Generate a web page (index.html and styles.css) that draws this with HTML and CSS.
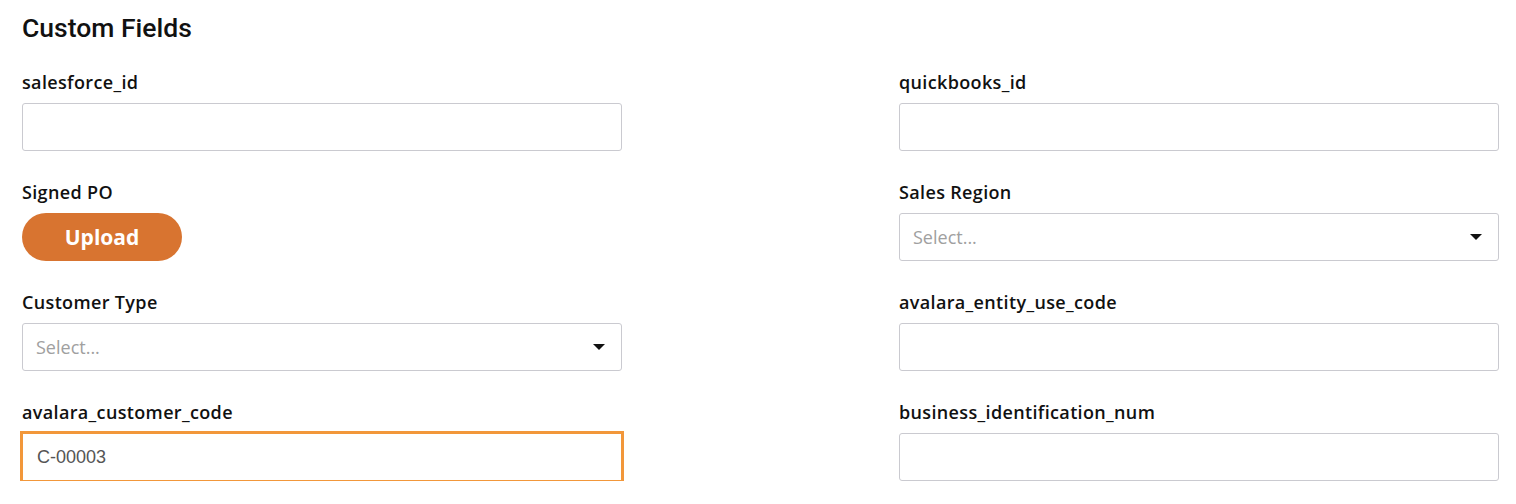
FILE: index.html
```html
<!DOCTYPE html>
<html>
<head>
    <title>Custom Fields</title>
    <link rel="stylesheet" href="styles.css">
</head>
<body>
<div class="custom-fields">
    <h2 class="section-title">Custom Fields</h2>
    <div class="field-grid">
        <div class="field">
            <label for="salesforce_id">salesforce_id</label>
            <input type="text" id="salesforce_id" class="text-input">
        </div>
        <div class="field">
            <label for="quickbooks_id">quickbooks_id</label>
            <input type="text" id="quickbooks_id" class="text-input">
        </div>
        <div class="field">
            <label>Signed PO</label>
            <button class="upload-btn">Upload</button>
        </div>
        <div class="field">
            <label>Sales Region</label>
            <div class="select-box">
                <span class="placeholder">Select...</span>
                <span class="caret"></span>
            </div>
        </div>
        <div class="field">
            <label>Customer Type</label>
            <div class="select-box">
                <span class="placeholder">Select...</span>
                <span class="caret"></span>
            </div>
        </div>
        <div class="field">
            <label for="avalara_entity_use_code">avalara_entity_use_code</label>
            <input type="text" id="avalara_entity_use_code" class="text-input">
        </div>
        <div class="field">
            <label for="avalara_customer_code">avalara_customer_code</label>
            <div class="text-input focused">
                <span class="input-value">C-00003</span>
            </div>
        </div>
        <div class="field">
            <label for="business_identification_num">business_identification_num</label>
            <input type="text" id="business_identification_num" class="text-input">
        </div>
    </div>
</div>
</body>
</html>
```

FILE: styles.css
```css
body {
    margin: 0;
    background: #fff;
    font-family: "Open Sans", sans-serif;
    color: #111;
}

.custom-fields {
    padding: 12px 17px 0 22px;
}

.section-title {
    margin: 0 0 26px;
    font-family: Roboto, sans-serif;
    font-weight: 500;
    font-size: 26.5px;
    line-height: 32px;
    color: #111;
}

.field-grid {
    display: grid;
    grid-template-columns: 600px 600px;
    column-gap: 277px;
    row-gap: 29px;
}

.field label {
    display: block;
    font-size: 18px;
    font-weight: 600;
    letter-spacing: 0.35px;
    line-height: 24px;
    margin-bottom: 9px;
    color: #111;
}

.text-input,
.select-box {
    display: block;
    box-sizing: border-box;
    width: 100%;
    height: 48px;
    border: 1px solid #cacad0;
    border-radius: 3px;
    background: #fff;
}

.text-input {
    padding-left: 14px;
    font-family: "Liberation Sans", Arial, sans-serif;
    font-size: 18px;
    color: #555;
    outline: none;
}

.text-input.focused {
    display: flex;
    align-items: center;
    border-color: #f2973a;
    border-radius: 0;
    box-shadow: 0 0 0 2px #f2973a;
}

.select-box {
    display: flex;
    align-items: center;
    justify-content: space-between;
    padding: 0 16px 0 13px;
}

.placeholder {
    font-size: 18px;
    font-weight: 400;
    color: #a0a0a0;
}

.caret {
    width: 0;
    height: 0;
    border-left: 6px solid transparent;
    border-right: 6px solid transparent;
    border-top: 6px solid #111;
}

.upload-btn {
    display: block;
    width: 160px;
    height: 48px;
    border: none;
    border-radius: 24px;
    background: #d87430;
    color: #fff;
    font-family: "Open Sans", sans-serif;
    font-weight: 700;
    font-size: 21px;
    cursor: pointer;
}
```
